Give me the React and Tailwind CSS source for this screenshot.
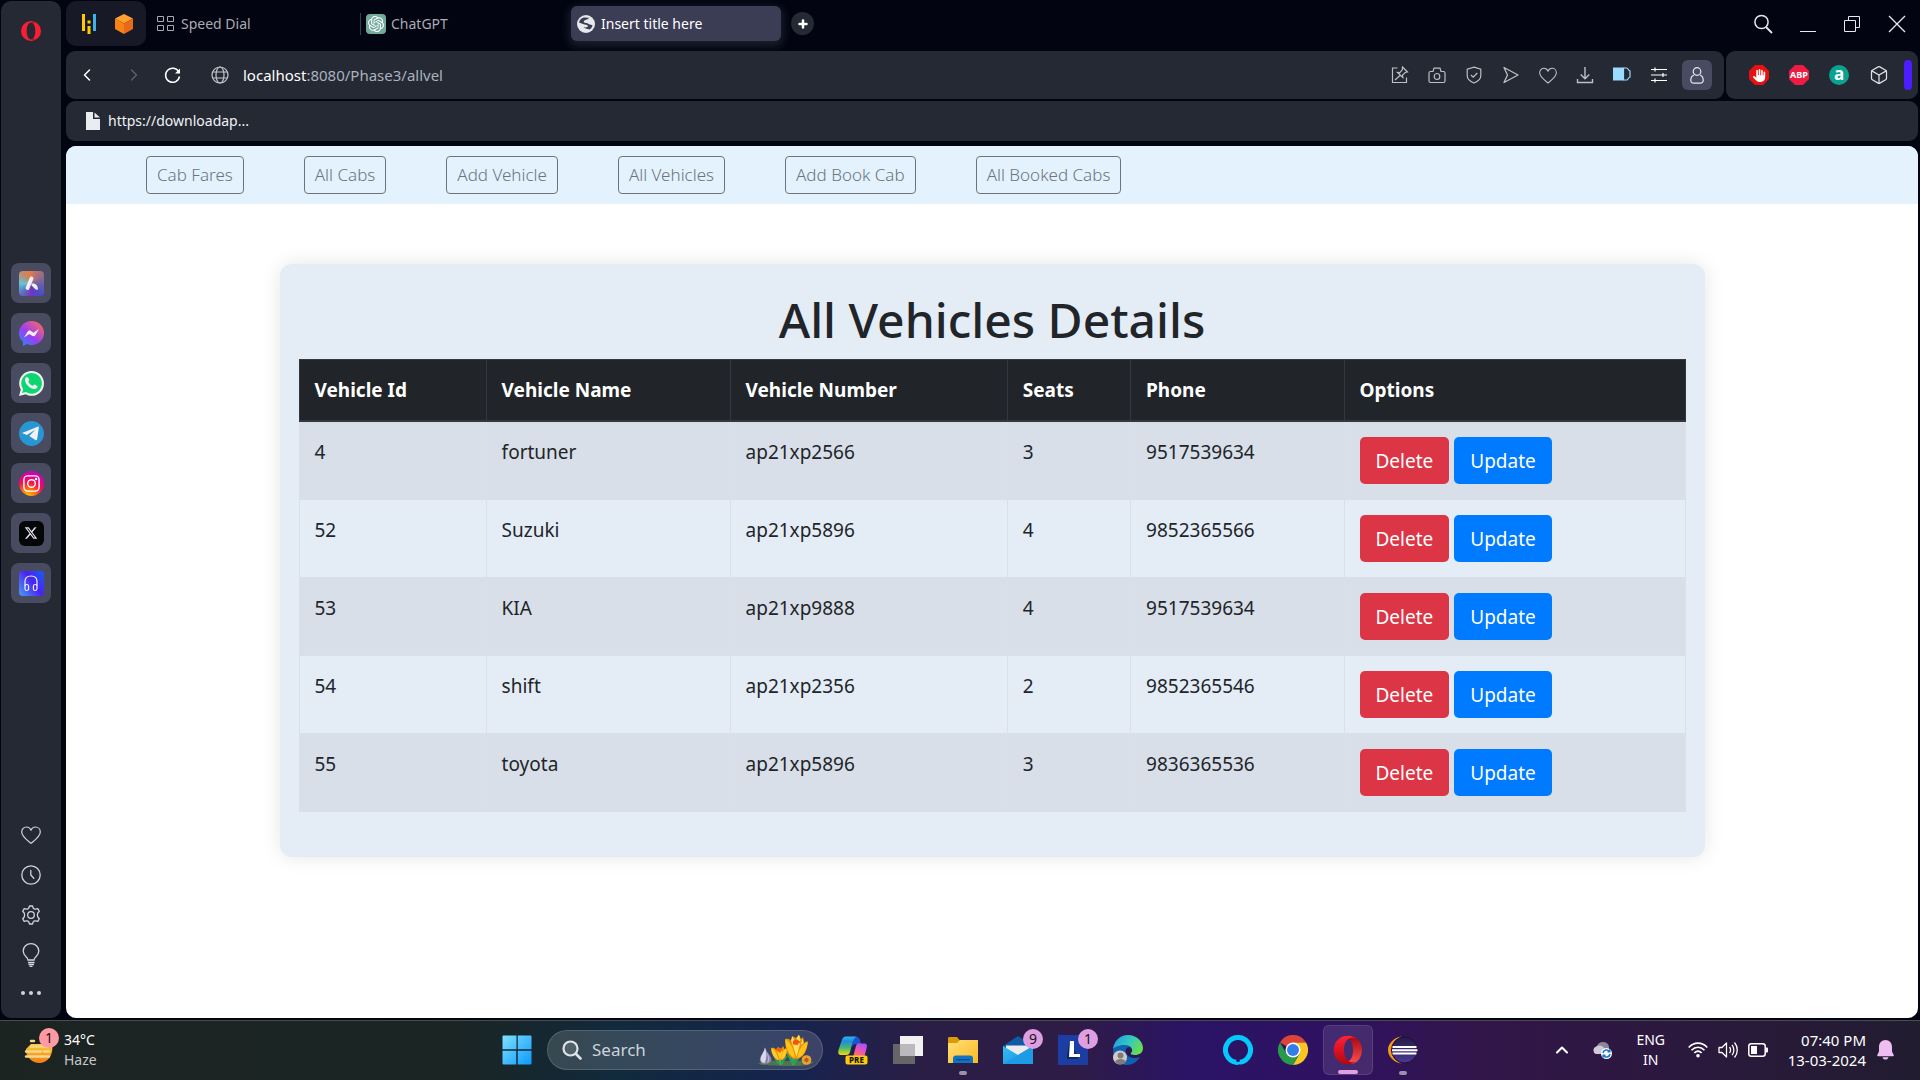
import React from 'react';
import {
  Search, Plus, ChevronLeft, ChevronRight, Globe, Box, ChevronUp,
} from 'lucide-react';
import { SiOpenai } from 'react-icons/si';
import { FaXTwitter, FaHand } from 'react-icons/fa6';

const vehicles = [
  { id: '4', name: 'fortuner', number: 'ap21xp2566', seats: '3', phone: '9517539634' },
  { id: '52', name: 'Suzuki', number: 'ap21xp5896', seats: '4', phone: '9852365566' },
  { id: '53', name: 'KIA', number: 'ap21xp9888', seats: '4', phone: '9517539634' },
  { id: '54', name: 'shift', number: 'ap21xp2356', seats: '2', phone: '9852365546' },
  { id: '55', name: 'toyota', number: 'ap21xp5896', seats: '3', phone: '9836365536' },
];

const navLinks = ['Cab Fares', 'All Cabs', 'Add Vehicle', 'All Vehicles', 'Add Book Cab', 'All Booked Cabs'];

const columns = [
  ['Vehicle Id', 'w-[13.5%]'],
  ['Vehicle Name', 'w-[17.6%]'],
  ['Vehicle Number', 'w-[20%]'],
  ['Seats', 'w-[8.9%]'],
  ['Phone', 'w-[15.4%]'],
  ['Options', 'w-[24.6%]'],
];

/* ---------- Sidebar icons ---------- */

function OperaLogo() {
  return (
    <svg viewBox="0 0 20 20" className="size-5">
      <path fillRule="evenodd" fill="#fb1d34" d="M10 0a10 10 0 1 0 0 20a10 10 0 1 0 0-20zM10 1.6c2.7 0 4.3 3.6 4.3 8.4s-1.6 8.4-4.3 8.4S5.700 14.800 5.700 10S7.300 1.600 10 1.600z" />
      <path fill="#b3101f" d="M10 1.200c1.800-.6 3.600-.2 5 .9-1.200-.4-2.300-.1-3.200.6-.5-.8-1.100-1.200-1.800-1.500zM10 18.800c1.800.6 3.600.2 5-.9-1.200.4-2.300.1-3.200-.6-.5.8-1.100 1.200-1.800 1.500z" />
    </svg>
  );
}

function AriaIcon() {
  return (
    <span className="flex size-[25px] items-center justify-center overflow-hidden rounded bg-[conic-gradient(from_0deg,#d27a5a,#6b62a8_25%,#4a4cc8_40%,#7a2fc4_50%,#5b6fc0_62%,#62c6d6_75%,#c08a70_88%,#f0763c)]">
      <svg viewBox="0 0 25 25" className="size-[25px]">
        <path d="M12.500 7.500 8.500 17" stroke="#f2f2f6" strokeWidth="3.800" strokeLinecap="round" />
        <path d="M13.200 12.600c3.200-.4 5.600 1.800 5.800 5.600-2.400 1.800-3.400-1.200-5.400-2.600-1.400-1-1.600-2.600-.4-3z" fill="#f2f2f6" />
      </svg>
    </span>
  );
}

function MessengerIcon() {
  return (
    <svg viewBox="0 0 25 25" className="size-[25px]">
      <defs>
        <linearGradient id="msg" x1="0" y1="1" x2="0.9" y2="0">
          <stop offset="0" stopColor="#1a94fb" />
          <stop offset="0.45" stopColor="#9a3df5" />
          <stop offset="1" stopColor="#ff6a5e" />
        </linearGradient>
      </defs>
      <path fill="url(#msg)" d="M12.500 0C5.500 0 0 5.200 0 12c0 3.600 1.500 6.700 4 8.900V25l3.800-2c1.500.5 3 .9 4.700.9 7 0 12.500-5.200 12.500-12S19.500 0 12.500 0z" />
      <path fill="#f2f2f6" d="m5 16.500 3.700-6c.7-1.100 2.200-1.300 3.200-.5l2.600 1.800L20 8l-3.700 6.300c-.7 1.100-2.200 1.300-3.200.5l-2.800-1.800z" />
    </svg>
  );
}

function WhatsappIcon() {
  return (
    <svg viewBox="0 0 25 25" className="size-[25px]">
      <path fill="#f2f2f6" d="M12.600 0C5.700 0 .2 5.500.2 12.300c0 2.200.6 4.300 1.600 6.100L0 25l6.700-1.700c1.800 1 3.800 1.500 5.900 1.500C19.500 24.800 25 19.200 25 12.400 25 5.500 19.500 0 12.600 0z" />
      <path fill="#0bd66f" d="M12.600 2.100c-5.700 0-10.300 4.600-10.300 10.200 0 2.200.7 4.200 1.900 5.900L3 22l4-1c1.600 1.100 3.500 1.700 5.600 1.700 5.700 0 10.300-4.600 10.300-10.300 0-5.600-4.600-10.300-10.300-10.300z" />
      <path fill="#f2f2f6" d="M9 6.600c-.4-.8-1.500-.8-2.100-.1-2.200 2.500-.3 6 2.200 8.400 2.700 2.600 6.300 4 8.600 2.300.8-.6 1.300-1.800.5-2.300l-2.300-1.300c-.9-.5-1.400 1.400-2.300 1.100-2-.8-3.400-2.200-4.200-4-.3-.8 1.200-1.100.8-2.100z" />
    </svg>
  );
}

function TelegramIcon() {
  return (
    <svg viewBox="0 0 25 25" className="size-[25px]">
      <circle cx="12.5" cy="12.500" r="12.500" fill="#2796d2" />
      <path fill="#f2f2f6" d="M3 12 19.200 5.600c.5-.1.700.2.700.6l-1.800 12.300c-.2.900-1 1-1.700.5L10.300 15l6-6.200-8.500 5.100z" />
    </svg>
  );
}

function InstagramIcon() {
  return (
    <span className="flex size-[25px] items-center justify-center rounded-full bg-[radial-gradient(circle_at_35%_105%,#fcd000_0%,#fb7a10_25%,#f6104c_50%,#e3008c_68%,#9a10f0_100%)]">
      <svg viewBox="0 0 20 20" className="size-[19px]" fill="none" stroke="#fff" strokeWidth="1.500">
        <rect x="2" y="2" width="16" height="16" rx="4" />
        <circle cx="10" cy="10" r="4" />
        <circle cx="14.800" cy="5.200" r="0.600" fill="#fff" />
      </svg>
    </span>
  );
}

function XIcon() {
  return (
    <span className="flex size-[25px] items-center justify-center rounded-md bg-[#050608] text-gray-200">
      <FaXTwitter className="size-[14px]" />
    </span>
  );
}

function PlayerIcon() {
  return (
    <span className="flex size-[25px] items-center justify-center rounded bg-[linear-gradient(55deg,#4aa0f5,#4b22f0_55%,#1560f5)]">
      <svg viewBox="0 0 16 17" className="h-[17px] w-4" fill="none" stroke="#eef" strokeWidth="1.200">
        <path d="M2 11V6.500C2 3 4.500 1 8 1s6 2 6 5.500V11" />
        <rect x="2" y="9.500" width="3.600" height="6" rx="1.800" />
        <rect x="10.400" y="9.500" width="3.600" height="6" rx="1.800" />
      </svg>
    </span>
  );
}

const sideApps = [
  ['Aria', AriaIcon],
  ['Messenger', MessengerIcon],
  ['WhatsApp', WhatsappIcon],
  ['Telegram', TelegramIcon],
  ['Instagram', InstagramIcon],
  ['X', XIcon],
  ['Player', PlayerIcon],
];

function HeartLine({ className }) {
  return (
    <svg viewBox="0 0 20 18" className={className} fill="none" stroke="currentColor" strokeWidth="1.200" strokeLinejoin="round">
      <path d="M10 17.300C6 14 .7 10.500.7 6C.7 3 2.900 1 5.400 1C7.400 1 9.200 2.200 10 4.300C10.800 2.200 12.600 1 14.600 1c2.500 0 4.700 2 4.700 5 0 4.500-5.300 8-9.300 11.300z" />
    </svg>
  );
}

function Sidebar() {
  return (
    <aside className="ml-px flex w-15 shrink-0 flex-col items-center rounded-[10px] bg-[#252933] pt-5 pb-[17px]">
      <button aria-label="Opera menu"><OperaLogo /></button>
      <div className="mt-[222px] flex flex-col gap-[10px]">
        {sideApps.map(([name, Icon]) => (
          <button key={name} aria-label={name} className="flex size-10 items-center justify-center rounded-lg bg-[#494b60]">
            <Icon />
          </button>
        ))}
      </div>
      <div className="mt-auto flex flex-col items-center gap-5 text-[#cfd3dc]">
        <button aria-label="Favourites" className="flex size-5 items-center justify-center"><HeartLine className="h-[18px] w-5" /></button>
        <button aria-label="History">
          <svg viewBox="0 0 20 20" className="size-5" fill="none" stroke="currentColor" strokeWidth="1.300" strokeLinecap="round">
            <circle cx="10" cy="10" r="9.200" />
            <path d="M9.800 5.500V10l3 3.200" />
          </svg>
        </button>
        <button aria-label="Settings">
          <svg viewBox="0 0 20 20" className="size-5" fill="none" stroke="currentColor" strokeWidth="1.300" strokeLinejoin="round">
            <path d="M8.500 1h3l.8 2.200q.8 1.200 2.200.9l2.300-.5 1.500 2.700-1.500 1.700q-.9 2 0 4l1.500 1.700-1.500 2.700-2.300-.5q-1.400-.3-2.200.9L11.500 19h-3l-.8-2.200q-.8-1.200-2.200-.9l-2.300.5-1.500-2.700L3.200 12q.9-2 0-4L1.700 6.300l1.500-2.700 2.300.5q1.400.3 2.200-.9z" />
            <circle cx="10" cy="10" r="3.300" />
          </svg>
        </button>
        <button aria-label="Tips" className="flex size-5 items-center justify-center">
          <svg viewBox="0 0 18 24" className="h-6 w-[18px] shrink-0" fill="none" stroke="currentColor" strokeWidth="1.300">
            <path d="M6 17c0-3-4.800-4-4.800-9A7.800 7.300 0 0 1 16.800 8c0 5-4.800 6-4.800 9zM6 19.500h6.500M6.500 21.500h5.500M7.500 23.300h3" />
          </svg>
        </button>
        <button aria-label="More" className="flex h-4 items-center gap-1">
          <i className="size-1 rounded-full bg-current" />
          <i className="size-1 rounded-full bg-current" />
          <i className="size-1 rounded-full bg-current" />
        </button>
      </div>
    </aside>
  );
}

/* ---------- Browser chrome ---------- */

function TabStrip() {
  return (
    <div className="flex h-[46px] items-center pt-px text-sm">
      <div className="flex h-[45px] w-20 shrink-0 items-center justify-between rounded-[10px] bg-[#171a26] pr-3 pl-4">
        <button aria-label="Pinned pandas tab">
          <svg viewBox="0 0 14 20" className="h-5 w-[14px]">
            <path fill="#ffca00" d="M0 0h3v17H0zM5.500 12h3v8h-3zM5.500 6.500h3v3h-3z" />
            <path fill="#3db2e8" d="M11 0h3v17h-3z" />
          </svg>
        </button>
        <button aria-label="Pinned package tab">
          <svg viewBox="0 0 20 20" className="size-5">
            <path fill="#ffa02e" d="m10 0 9 4.500-9 5-9-5z" />
            <path fill="#f98218" d="m1 4.500 9 5V20l-9-5z" />
            <path fill="#e96a16" d="m19 4.500-9 5V20l9-5z" />
          </svg>
        </button>
      </div>
      <div role="tablist" className="flex h-full items-center pl-[5px]">
        <button role="tab" className="flex h-[35px] w-[209px] items-center gap-[7px] pl-[6px] text-[#a9abb0]">
          <svg viewBox="0 0 17 15" className="h-[15px] w-[17px]" fill="none" stroke="currentColor">
            <path d="M.5.500h6v5h-6zM10.500.500h6v5h-6zM.5 9.500h6v5h-6zM10.500 9.500h6v5h-6z" />
          </svg>
          Speed Dial
        </button>
        <i className="h-[22px] w-px bg-[#3a3d4c]" />
        <button role="tab" className="flex h-[35px] w-[210px] items-center gap-[5px] pl-[5px] text-[#a9abb0]">
          <span className="flex size-5 items-center justify-center rounded-sm bg-[#74aa9c] text-white">
            <SiOpenai className="size-4" />
          </span>
          ChatGPT
        </button>
        <button role="tab" aria-selected="true" className="flex h-[35px] w-[210px] items-center gap-[6px] rounded-md bg-[#3b3d54] pl-[6px] text-white shadow-[0_3px_8px_2px_#1d202c]">
          <svg viewBox="0 0 18 18" className="size-[18px]">
            <circle cx="9" cy="9" r="9" fill="#e6e8ec" />
            <path fill="#3b3d54" d="M5.500 3C8 1.800 11 3 12.500 2.800L10 4.500c-2.500.5-4 1.500-3 3 1 .8 3.500 0 4.500 1.500 2 .6 3 1 4 1.200-.5 2.300-1.500 3.300-3 4.300-2-.5-4.500-1-6-2.500 2 .8 4.200.5 4.500-1-.5-1.500-3-1-5-2L2 7.500C2.500 5.500 3.500 4 5.500 3z" />
          </svg>
          Insert title here
        </button>
        <button aria-label="New tab" className="ml-[10px] flex size-[23px] items-center justify-center rounded-full bg-[#252933] text-white">
          <Plus className="size-3" strokeWidth={5} />
        </button>
      </div>
      <div className="ml-auto flex items-center gap-[27px] pr-3 text-[#e8e9ee]">
        <button aria-label="Search tabs">
          <svg viewBox="0 0 20 20" className="size-5" fill="none" stroke="currentColor" strokeWidth="1.500"><circle cx="8.500" cy="8" r="6.600" /><path d="m13 13 6 6" strokeWidth="1.800" /></svg>
        </button>
        <button aria-label="Minimise" className="flex size-4 items-end"><i className="h-px w-full bg-current" /></button>
        <button aria-label="Restore">
          <svg viewBox="0 0 16 16" className="mx-px size-4" fill="none" stroke="currentColor">
            <path d="M.5 4.500h11v11H.500zM4.500 4.500v-4h11v11h-4" />
          </svg>
        </button>
        <button aria-label="Close">
          <svg viewBox="0 0 18 18" className="size-[18px]" fill="none" stroke="currentColor" strokeWidth="1.300"><path d="m1 1 16 16M17 1 1 17" /></svg>
        </button>
      </div>
    </div>
  );
}

const toolIcons = [
  ['Save page', (
    <svg viewBox="0 0 18 18" className="size-[18px]" fill="none" stroke="currentColor" strokeWidth="1.200">
      <path d="M6.500 2H1.500v14.500h14V11.500M11.500 1l5 5-2.300.5-2.700 2.700.3 2.300L6.500 6.500l2.300.2 2.500-2.900zM9 9.500 4 14" />
    </svg>
  )],
  ['Snapshot', (
    <svg viewBox="0 0 18 18" className="size-[18px]" fill="none" stroke="currentColor" strokeWidth="1.200">
      <path d="M2.500 5.500H5l1-3.300h6l1 3.300h2.500a1.500 1.500 0 0 1 1.500 1.500v8a1.500 1.500 0 0 1-1.500 1.500h-13A1.500 1.500 0 0 1 1 15V7a1.500 1.500 0 0 1 1.500-1.500z" />
      <ellipse cx="9" cy="10.500" rx="2.800" ry="3" />
    </svg>
  )],
  ['Tracker blocker', (
    <svg viewBox="0 0 18 18" className="size-[18px]" fill="none" stroke="currentColor" strokeWidth="1.200">
      <path d="m9 1.200 6.800 2v6.300c0 3.800-3 6-6.800 7.500-3.800-1.500-6.800-3.700-6.800-7.500V3.200zM6 9l2.200 2.200L12.300 7" />
    </svg>
  )],
  ['Send to Flow', (
    <svg viewBox="0 0 18 18" className="size-[18px]" fill="none" stroke="currentColor" strokeWidth="1.300" strokeLinejoin="round">
      <path d="M2 1.500 16 9 2 16.500 5.500 9z" />
    </svg>
  )],
  ['Bookmark', <HeartLine className="h-[17px] w-[18px]" />],
  ['Downloads', (
    <svg viewBox="0 0 18 18" className="size-[18px]" fill="none" stroke="currentColor" strokeWidth="1.400">
      <path d="M9 1v11.500M4.700 8.500 9 12.700l4.300-4.200M1.500 13v3.500h15V13" />
    </svg>
  )],
  ['Battery saver', (
    <svg viewBox="0 0 18 18" className="size-[18px]" fill="none" stroke="#9adcff" strokeWidth="1.200">
      <path fill="#9adcff" d="M.6 2h9.900v12H.6z" />
      <path d="M10.500 2h3.200c1.500 0 1.300 2.500 3.300 3v6c-2 .5-1.800 3-3.300 3h-3.200" />
    </svg>
  )],
  ['Easy setup', (
    <svg viewBox="0 0 18 18" className="size-[18px] text-white" fill="none" stroke="currentColor" strokeWidth="1.200">
      <path d="M1 3.500h16M1 9h16M1 14.500h16M5 1.500v4M13 7v4M5 12.500v4" />
    </svg>
  )],
];

function AddressBar() {
  return (
    <div className="mt-[5px] flex h-12 gap-[2px]">
      <div className="flex min-w-0 flex-1 items-center rounded-[9px] bg-[#252933] pr-3 pl-[10px] text-white">
        <button aria-label="Back" className="flex w-[22px] justify-center"><ChevronLeft className="size-5" strokeWidth={1.800} /></button>
        <button aria-label="Forward" className="ml-[25px] flex w-[22px] justify-center text-[#5f6370]"><ChevronRight className="size-5" strokeWidth={1.500} /></button>
        <button aria-label="Reload" className="ml-4 flex w-[22px] justify-center">
          <svg viewBox="0 0 17 17" className="size-[17px]" fill="none" stroke="currentColor" strokeWidth="1.500">
            <path d="M14.800 5A7 7 0 1 0 15.500 9.500" />
            <path d="M16 1.500v5h-5z" fill="currentColor" stroke="none" />
          </svg>
        </button>
        <button aria-label="Site information" className="ml-7 text-[#c3c6cc]">
          <svg viewBox="0 0 18 18" className="size-[18px]" fill="none" stroke="currentColor" strokeWidth="1.200">
            <circle cx="9" cy="9" r="8" />
            <ellipse cx="9" cy="9" rx="4" ry="8" />
            <path d="M1.800 6h14.400M1.800 12h14.400" />
          </svg>
        </button>
        <span className="ml-[14px] text-[15px] text-[#a9b2bf]"><span className="text-white">localhost</span>:8080/Phase3/allvel</span>
        <div className="ml-auto flex items-center gap-[19px] text-[#bdbfc6]">
          {toolIcons.map(([name, icon]) => (
            <button key={name} aria-label={name} className="flex w-[18px] justify-center">{icon}</button>
          ))}
        </div>
        <button aria-label="Profile" className="ml-[14px] flex size-[30px] items-center justify-center rounded-md bg-[#494b63]">
          <svg viewBox="0 0 14 17" className="h-[17px] w-[14px]" fill="none" stroke="#e8e9ee" strokeWidth="1.200">
            <circle cx="7" cy="4.500" r="3.800" />
            <path d="M4 8C2 8.800.8 10.800.8 13c0 2 1.200 3.200 3 3.200h6.400c1.800 0 3-1.200 3-3.200 0-2.200-1.200-4.200-3.200-5" />
          </svg>
        </button>
      </div>
      <div className="flex w-48 items-center rounded-[9px] bg-[#252933] pr-[6px] pl-[23px]">
        <div className="flex gap-5">
          <button aria-label="AdBlock" className="relative flex size-5 items-center justify-center text-white">
            <svg viewBox="0 0 20 20" className="absolute size-5"><path fill="#ea1010" d="M6 0h8l6 6v8l-6 6H6l-6-6V6z" /></svg>
            <FaHand className="relative size-[13px]" />
          </button>
          <button aria-label="Adblock Plus" className="relative flex size-5 items-center justify-center text-[9px] font-bold text-white">
            <svg viewBox="0 0 20 20" className="absolute size-5"><path fill="#ee1c42" d="M6 0h8l6 6v8l-6 6H6l-6-6V6z" /></svg>
            <span className="relative">ABP</span>
          </button>
          <button aria-label="Amazon Assistant" className="flex size-5 items-center justify-center rounded-full bg-[#0aa392] pb-[3px] text-[17px] leading-none font-bold text-white">a</button>
          <button aria-label="Extensions" className="text-[#dfe1e6]"><Box className="size-5" strokeWidth={1.500} /></button>
        </div>
        <i className="ml-auto h-[30px] w-2 rounded bg-[#4c1dff]" />
      </div>
    </div>
  );
}

function BookmarkBar() {
  return (
    <div className="mt-[2px] flex h-10 items-center rounded-[9px] bg-[#252933] pl-5">
      <a href="#download" className="flex items-center gap-2 text-sm text-[#f0f2f5]">
        <svg viewBox="0 0 14 18" className="h-[18px] w-[14px]"><path fill="#e9edf2" d="M0 0h7v7h7v11H0z" /><path fill="#e9edf2" d="m8.500.500 5.500 5H8.500z" /></svg>
        https://downloadap...
      </a>
    </div>
  );
}

/* ---------- Web page ---------- */

function VehiclesPage() {
  return (
    <main className="mt-[5px] flex-1 overflow-hidden rounded-[10px] bg-white">
      <nav className="flex flex-wrap gap-15 bg-[#e3f2fd] px-20 py-[10px]">
        {navLinks.map((label) => (
          <button key={label} className="h-[38px] rounded border border-[#6c757d] px-[10px] text-[17px] font-light text-[#6c757d]">{label}</button>
        ))}
      </nav>
      <section className="mx-auto mt-15 max-w-[1425px] rounded-xl bg-[#e4ecf6] px-[19px] pt-[26px] pb-[45px] text-[#212529] shadow-[0_0_20px_rgba(0,0,0,0.1)]">
        <h1 className="mb-[9px] text-center text-[48px] leading-[60px] font-medium">All Vehicles Details</h1>
        <table className="w-full table-fixed border-collapse border border-[#dae0e7] text-[19px] leading-[30px]">
          <thead>
            <tr className="bg-[#212529] text-left text-white">
              {columns.map(([label, width]) => (
                <th key={label} scope="col" className={`${width} border border-b-2 border-[#32383e] px-[15px] py-[15px] text-[19px] leading-[30px] font-bold`}>{label}</th>
              ))}
            </tr>
          </thead>
          <tbody>
            {vehicles.map((v) => (
              <tr key={v.id} className="align-top odd:bg-[#d8dfe8]">
                {[v.id, v.name, v.number, v.seats, v.phone].map((value, i) => (
                  <td key={i} className="border border-[#dae0e9] px-[15px] py-[15px]">{value}</td>
                ))}
                <td className="border border-[#dae0e9] px-[15px] py-[15px]">
                  <div className="flex gap-[5px]">
                    <button className="h-[47px] rounded-[5px] bg-[#dc3545] px-4 text-white">Delete</button>
                    <button className="h-[47px] rounded-[5px] bg-[#007bff] px-4 text-white">Update</button>
                  </div>
                </td>
              </tr>
            ))}
          </tbody>
        </table>
      </section>
    </main>
  );
}

/* ---------- Taskbar ---------- */

function Crocuses() {
  return (
    <svg viewBox="0 0 56 32" className="h-8 w-14">
      <path fill="#4f7550" d="M0 29.500C8 26 16 27 28 27s20-1 28 1c-4 4-14 4-27 4S4 32 0 29.500z" />
      <path stroke="#37b069" strokeWidth="2.200" fill="none" d="M22.500 31c0-3 0-4-1-6M35 31c-1-4 0-7 2-10" />
      <path fill="#2f9c58" d="M34 30c1-4 5-10 12-14-2 6-6 9-9 15zM23 30c0-3 3-7 7-9-1 4-4 5-5 9zM22 30c-1-3-3-5-6-6 1 3 3 4 4 6zM35 28c-1-5-4-9-7-12 0 5 3 8 5 13z" />
      <path fill="#8784ab" d="M7 13.500c1 4 6 8 6.500 11.500S10 30 7 30s-6-2-5-5.500c1-4 4-5.500 5-11z" />
      <path fill="#d9d7ea" d="M7 13.500c-1 5-4 7-4.300 11S6 29 6.500 29c2-4 2.500-9 .5-15.500z" />
      <path fill="#b8b5d4" d="M8 18c2 4 3 7 1 11 3-1 4-6-1-11z" />
      <path fill="#e99a08" d="M13 14c2-.4 4 0 5 1.500l2-2.500 3 2 2-3 1.500 3c1-1 2-1 3-1-.3 6-2.500 12.500-7.500 12.500S13 20 13 14z" />
      <path fill="#ffc928" d="M13.500 14.500c3 0 6 6 7 11.500-4-1-7-6-7-11.500zM28.500 14.500c-3 1-5 6-5.500 11 4-1 6-6 5.500-11zM19 17l3-2 2.500 3-2.500 8z" />
      <path fill="#f0640c" d="m17.500 15.500 3-2 4 1.500-2.500 4z" />
      <path fill="#e89306" d="M27 5c3-.6 5 0 6 2l1-5 4 2 3-3.500L43 5l2-2 1 6c1-1.500 2.500-1.500 4-1.500C49.500 15 46 25 38 25S27 14 27 5z" />
      <path fill="#ffc21c" d="M27.500 5.500C32 7 36 16 37 24c-6-2-9.500-10-9.500-18.500zM49.500 8C44 10 40 17 39.500 24c6-2 9.500-9 10-16z" />
      <path fill="#ffdd5c" d="m34 9 4-3 4 4-3.500 13zM34.500 2.500l2.500 5-2 2-2-3zM41 1l1.500 5-2.500 3-2-4zM45 4l.5 5-3 2z" />
      <path fill="#f2560d" d="m35 7 3-2 4 2.500-2.500 3.500-4.500-.5z" />
      <circle cx="48.500" cy="26" r="4.800" fill="#f0a935" />
      <circle cx="48.500" cy="26" r="2.200" fill="#b0611a" />
      <path stroke="#c77f22" strokeWidth=".6" d="M48.500 21.200v2.400M48.500 28.400v2.400M43.700 26h2.400M50.900 26h2.400M45.100 22.600l1.700 1.700M50.200 27.700l1.700 1.700M51.900 22.600l-1.700 1.700M46.800 27.700l-1.700 1.700" />
    </svg>
  );
}

function CopilotIcon() {
  return (
    <svg viewBox="0 0 30 30" className="size-[30px]">
      <defs>
        <linearGradient id="cpA" x1="0" y1="0" x2="0" y2="1">
          <stop offset="0" stopColor="#28b8f5" /><stop offset="0.25" stopColor="#2489e0" /><stop offset="0.6" stopColor="#3fb877" /><stop offset="1" stopColor="#f5d70a" />
        </linearGradient>
        <linearGradient id="cpB" x1="0.7" y1="0" x2="0.2" y2="1">
          <stop offset="0" stopColor="#a052ff" /><stop offset="0.5" stopColor="#ee54b0" /><stop offset="1" stopColor="#fb7a52" />
        </linearGradient>
      </defs>
      <path fill="#1854d4" d="M14 2h5c2 0 3 2 4 7h-5c-2 0-3 1-4 3 .3-4 1-6 0-10z" />
      <path fill="url(#cpA)" d="M8 1.500h11c-3 1-4 4-5 8l-2 7.500c-.6 2-1.500 3-4 3H4c-3 0-4.500-1-3.500-5L3.500 6C4.500 3 5.500 1.500 8 1.500z" />
      <path fill="url(#cpB)" d="M20 8.500h6c3 0 3.500 2 2.500 5l-1.500 6c-.6 2-1 3-3 3h-9l3-11.500c.5-1.500 1-2.500 2-2.500z" />
      <rect x="7.500" y="20.500" width="22" height="9" rx="2" fill="#fdcb0b" />
      <text x="18.500" y="28" textAnchor="middle" fontSize="8" fontWeight="800" fill="#17130a">PRE</text>
    </svg>
  );
}

function TaskViewIcon() {
  return (
    <svg viewBox="0 0 30 30" className="size-[30px]">
      <path fill="#666568" d="M0 9h22v20H0z" />
      <path fill="#f1f1f2" d="M7 1h23v20H7z" />
      <path fill="#bbb9bd" d="M7 9h15v12H7z" />
    </svg>
  );
}

function FolderIcon() {
  return (
    <svg viewBox="0 0 30 30" className="size-[30px]">
      <defs><linearGradient id="fold" x1="0" y1="0" x2="1" y2="1"><stop offset="0" stopColor="#ffe07a" /><stop offset="1" stopColor="#fcb921" /></linearGradient></defs>
      <path fill="#dc9a07" d="M0 3.500C0 2.500.5 2 1.500 2H9l3 3.500H20V10H0z" />
      <path fill="url(#fold)" d="M0 8h9l3-3h18v23H0z" />
      <path fill="#1273c4" d="M5 28v-4.500C5 21.500 6 20.500 8 20.500h14c2 0 3 1 3 3V28z" />
      <path fill="#0a4a86" d="M8 24h14v1.300H8z" />
    </svg>
  );
}

function MailIcon() {
  return (
    <svg viewBox="0 0 30 30" className="size-[30px]">
      <defs><linearGradient id="mail" x1="0" y1="0" x2="1" y2="1"><stop offset="0" stopColor="#34bdf3" /><stop offset="1" stopColor="#1b8fe0" /></linearGradient></defs>
      <path fill="#0c5ba4" d="m0 11 15-10 15 10v6H0z" />
      <path fill="#ececee" d="M3 10.500h24v6l-12 6-12-6z" />
      <path fill="url(#mail)" d="m0 11 15 9 15-9v18H0z" />
      <path fill="#1e9be6" d="M0 29 30 11v18z" />
    </svg>
  );
}

function LIcon() {
  return (
    <svg viewBox="0 0 30 30" className="size-[30px]">
      <path fill="#1c3da4" d="M0 0h30v30H0z" />
      <path fill="#0c2a5a" d="m11 8-2 13v3h10l2-2z" />
      <path fill="#fff" d="M12 6h4v13h6v3H11z" />
    </svg>
  );
}

function EdgeIcon() {
  return (
    <svg viewBox="0 0 30 30" className="size-[30px]">
      <defs>
        <linearGradient id="edA" x1="0" y1="0" x2="1" y2="0.4"><stop offset="0" stopColor="#1b9be0" /><stop offset="0.6" stopColor="#35c8c0" /><stop offset="1" stopColor="#63dc56" /></linearGradient>
      </defs>
      <path fill="#1060b4" d="M4 8c6-3 12 0 13 4-4 0-5 3-4 6 2 5 9 6 14 4-3 5-8 8-13 8C6 30 0 24 0 15z" />
      <path fill="url(#edA)" d="M0 14C1 6 7 0 15 0c9 0 15 7 15 13 0 5-4 7-8 7-3 0-5-1-4-2 3-3 0-8-6-8C6 10 2 12 0 14z" />
      <circle cx="7" cy="22.500" r="7" fill="#cfcbc8" />
      <circle cx="7.500" cy="20.500" r="3" fill="#82797a" />
      <path fill="#82797a" d="M2 27c1-4 10-4 11 0-2 3-9 3-11 0z" />
    </svg>
  );
}

function AlexaIcon() {
  return (
    <svg viewBox="0 0 30 30" className="size-[30px]">
      <path fill="none" stroke="#05c8fb" strokeWidth="5" d="M13 27.300A12.500 12.500 0 1 1 17 27.300" />
      <path fill="#05c8fb" d="M12 24.500v5l2 .5c6-1 9-4 10-8-3 3-6 4.500-10 5z" />
    </svg>
  );
}

function ChromeIcon() {
  return (
    <svg viewBox="0 0 30 30" className="size-[30px]">
      <path fill="#dd4437" d="M15 15 2 7.500A15 15 0 0 1 28 7.500H15z" />
      <path fill="#fcc622" d="M15 7.500h13A15 15 0 0 1 15 30l6.500-11.300z" />
      <path fill="#289a4b" d="M2 7.500A15 15 0 0 0 15 30l6.500-11.300L8.500 18.800z" />
      <circle cx="15" cy="15" r="7.500" fill="#fff" />
      <circle cx="15" cy="15" r="6" fill="#327de8" />
    </svg>
  );
}

function OperaTaskIcon() {
  return (
    <svg viewBox="0 0 30 30" className="size-[30px]">
      <defs>
        <linearGradient id="opA" x1="0" y1="0" x2="0" y2="1"><stop offset="0" stopColor="#ff2138" /><stop offset="1" stopColor="#b4060f" /></linearGradient>
        <linearGradient id="opB" x1="0" y1="0" x2="0" y2="1"><stop offset="0" stopColor="#a10612" /><stop offset="1" stopColor="#ff5050" /></linearGradient>
      </defs>
      <path fill="url(#opB)" d="M12 3.500C20-3 29 5 29 15s-9 18-17 11.500c5 1 8-4 8-11.500S17 2.500 12 3.500z" />
      <path fill="url(#opA)" fillRule="evenodd" d="M15 .7C6.500.7.700 7 .7 15S6.500 29.300 15 29.300c3 0 6-1 8-3-5 2.500-12 0-12-11.300S18 1.300 23 3.700c-2-2-5-3-8-3z" />
    </svg>
  );
}

function EclipseIcon() {
  return (
    <svg viewBox="0 0 30 30" className="size-[30px]">
      <defs>
        <linearGradient id="ecl" x1="0" y1="0" x2="0" y2="1"><stop offset="0" stopColor="#251c45" /><stop offset="1" stopColor="#4a3a92" /></linearGradient>
      </defs>
      <path fill="#f5941e" d="M14 1.500C5.500 2.500 0 8.500 0 15s5.500 12.500 14 13.500C7.500 26 4 21 4 15S7.500 4 14 1.500z" />
      <circle cx="16.500" cy="15" r="13" fill="url(#ecl)" stroke="#191230" />
      <path stroke="#fff" strokeWidth="2" d="M4.500 12H28.500M4 15.200h25.500M4.500 18.400h24" />
    </svg>
  );
}

function TaskButton({ label, children, badge, running, active }) {
  return (
    <button aria-label={label} className={`relative flex size-[50px] items-center justify-center rounded-md ${active ? 'border border-white/10 bg-white/10' : ''}`}>
      {children}
      {badge && (
        <span className="absolute top-1 right-0 flex size-5 items-center justify-center rounded-full bg-[#dd9fe2] text-sm leading-none text-[#1a1220]">{badge}</span>
      )}
      {running && <i className={`absolute bottom-0 h-1 rounded-full ${active ? 'w-5 bg-[#df9fe3]' : 'w-2 bg-[#9a92a8]'}`} />}
    </button>
  );
}

function Taskbar() {
  return (
    <footer className="grid h-15 shrink-0 grid-cols-[1fr_auto_1fr] items-center bg-[linear-gradient(90deg,#1c2422_0%,#1a2524_24%,#112a3c_32%,#15244e_41%,#2a1e45_48%,#2e1c46_56%,#2b1366_62%,#2f1260_70%,#32164a_77%,#2c183f_86%,#211c30_100%)] text-white shadow-[inset_0_1px_0_#4a4c52]">
      <button className="flex items-center gap-[10px] pl-6 text-left">
        <span className="relative block h-10 w-[30px]">
          <svg viewBox="0 0 30 40" className="h-10 w-[30px]">
            <defs><linearGradient id="haze" x1="0" y1="0" x2="0" y2="1"><stop offset="0" stopColor="#ffcb35" /><stop offset="1" stopColor="#f07c18" /></linearGradient></defs>
            <path fill="url(#haze)" d="M7 14h21c2 10-4 19-12.500 19S1 25 2 19z" />
            <path stroke="#f5d78a" strokeWidth="2.400" strokeLinecap="round" d="M7 11h3M7 16.500h18M2 21.500h15M20 21.500h5M2 26.500h23" />
          </svg>
          <span className="absolute -top-[2px] -right-[5px] flex size-5 items-center justify-center rounded-full bg-[#ff99a4] text-sm leading-none text-[#1a1220]">1</span>
        </span>
        <span className="block text-sm leading-5">34°C<br /><span className="text-[#c4c7c6]">Haze</span></span>
      </button>

      <div className="flex items-center gap-[5px]">
        <TaskButton label="Start">
          <svg viewBox="0 0 30 30" className="size-[30px]">
            <defs><linearGradient id="win" x1="0" y1="0" x2="1" y2="1"><stop offset="0" stopColor="#7fe0ff" /><stop offset="1" stopColor="#0c9aff" /></linearGradient></defs>
            <path fill="url(#win)" d="M1.500.500H15v14H.500v-13a1 1 0 0 1 1-1zM15.500.500h13a1 1 0 0 1 1 1v13h-14zM.5 15.500h14v14h-13a1 1 0 0 1-1-1zM15.500 15.500h14v13a1 1 0 0 1-1 1h-13z" />
            <path stroke="#17283a" d="M15 0v30M0 15h30" />
          </svg>
        </TaskButton>
        <label className="flex h-10 w-[276px] items-center rounded-full border border-white/15 bg-white/15 pr-2 pl-[14px]">
          <svg viewBox="0 0 20 20" className="size-5 shrink-0" fill="#ffffff22" stroke="#dfe3ea" strokeWidth="2.200" strokeLinecap="round"><circle cx="8.500" cy="8.500" r="7" /><path d="m14 14 4.500 4.500" strokeWidth="2.600" /></svg>
          <input type="text" placeholder="Search" aria-label="Search" className="ml-[10px] w-0 flex-1 bg-transparent text-[17px] outline-none placeholder:text-[#ccd3dc]" />
          <Crocuses />
        </label>
        <TaskButton label="Copilot"><CopilotIcon /></TaskButton>
        <TaskButton label="Task view"><TaskViewIcon /></TaskButton>
        <TaskButton label="File Explorer" running><FolderIcon /></TaskButton>
        <TaskButton label="Mail" badge="9"><MailIcon /></TaskButton>
        <TaskButton label="L" badge="1"><LIcon /></TaskButton>
        <TaskButton label="Edge"><EdgeIcon /></TaskButton>
        <span className="w-[50px]" />
        <TaskButton label="Alexa"><AlexaIcon /></TaskButton>
        <TaskButton label="Chrome"><ChromeIcon /></TaskButton>
        <TaskButton label="Opera" running active><OperaTaskIcon /></TaskButton>
        <TaskButton label="Eclipse" running><EclipseIcon /></TaskButton>
      </div>

      <div className="flex items-center justify-end pr-[26px]">
        <button aria-label="Hidden icons"><ChevronUp className="size-5" strokeWidth={2.500} /></button>
        <button aria-label="OneDrive" className="ml-5">
          <svg viewBox="0 0 20 18" className="h-[18px] w-5">
            <path fill="#8b8698" d="M5 6a6 5 0 0 1 12 0v6H6z" />
            <path fill="#cfcad6" d="M4 13a4 4 0 0 1 0-7.500c4-2.500 8 0 9 3V13z" />
            <circle cx="14.500" cy="12.500" r="5.500" fill="#fff" />
            <path fill="none" stroke="#1c76d0" strokeWidth="1.600" d="M11 12a3.600 3.600 0 0 1 6.500-1.500M18 13a3.600 3.600 0 0 1-6.500 1.500M17.800 8.500v2.300h-2.300M11.200 16.500v-2.300h2.300" />
          </svg>
        </button>
        <button className="ml-6 w-[30px] text-center text-sm leading-5">ENG<br />IN</button>
        <button aria-label="Network, volume and battery" className="ml-[22px] flex items-center gap-[10px]">
          <svg viewBox="0 0 20 16" className="h-4 w-5" fill="none" stroke="currentColor" strokeWidth="1.600">
            <path d="M.7 5.500C6-.3 14-.3 19.300 5.500M3.500 8.300c3.800-4 9.200-4 13 0M6.300 11c2.200-2.200 5.200-2.200 7.400 0" />
            <circle cx="10" cy="13.800" r="1.800" fill="currentColor" stroke="none" />
          </svg>
          <svg viewBox="0 0 20 18" className="h-[18px] w-5" fill="none" stroke="currentColor" strokeWidth="1.300" strokeLinejoin="round">
            <path d="M1 6.500h3L8.500 2v14L4 11.500H1zM11.500 6c1.300 1.800 1.300 4.200 0 6M14 3.800c2.500 3 2.500 7.400 0 10.400M16.500 1.500c3.700 4.300 3.700 10.700 0 15" />
          </svg>
          <svg viewBox="0 0 20 14" className="h-[14px] w-5" fill="none" stroke="currentColor" strokeWidth="1.500">
            <rect x="0.800" y="0.800" width="16.400" height="12.400" rx="2.500" />
            <path fill="currentColor" stroke="none" d="M3 3h6v8H3zM18 4.500h1c.6 0 1 .5 1 1v3c0 .5-.4 1-1 1h-1z" />
          </svg>
        </button>
        <button className="ml-5 text-right text-[15px] leading-5">07:40 PM<br />13-03-2024</button>
        <button aria-label="Notifications" className="ml-[11px]">
          <svg viewBox="0 0 17 20" className="h-5 w-[17px]" fill="#f0bdf2">
            <path d="M8.500 0C4.500 0 2 3 2 7v4.500L.3 15c-.3.700 0 1.200.700 1.200h15c.700 0 1-.5.700-1.200L15 11.500V7c0-4-2.500-7-6.500-7zM5.500 17.300h6c-.3 1.500-1.500 2.300-3 2.300s-2.700-.8-3-2.300z" />
          </svg>
        </button>
      </div>
    </footer>
  );
}

export default function App() {
  return (
    <div className="flex min-h-screen flex-col bg-[#020412] font-['Noto_Sans','Open_Sans',sans-serif]">
      <div className="flex flex-1 gap-[5px] pt-px pb-[2px]">
        <Sidebar />
        <div className="-mt-px flex min-w-0 flex-1 flex-col pr-[2px]">
          <TabStrip />
          <AddressBar />
          <BookmarkBar />
          <VehiclesPage />
        </div>
      </div>
      <Taskbar />
    </div>
  );
}
